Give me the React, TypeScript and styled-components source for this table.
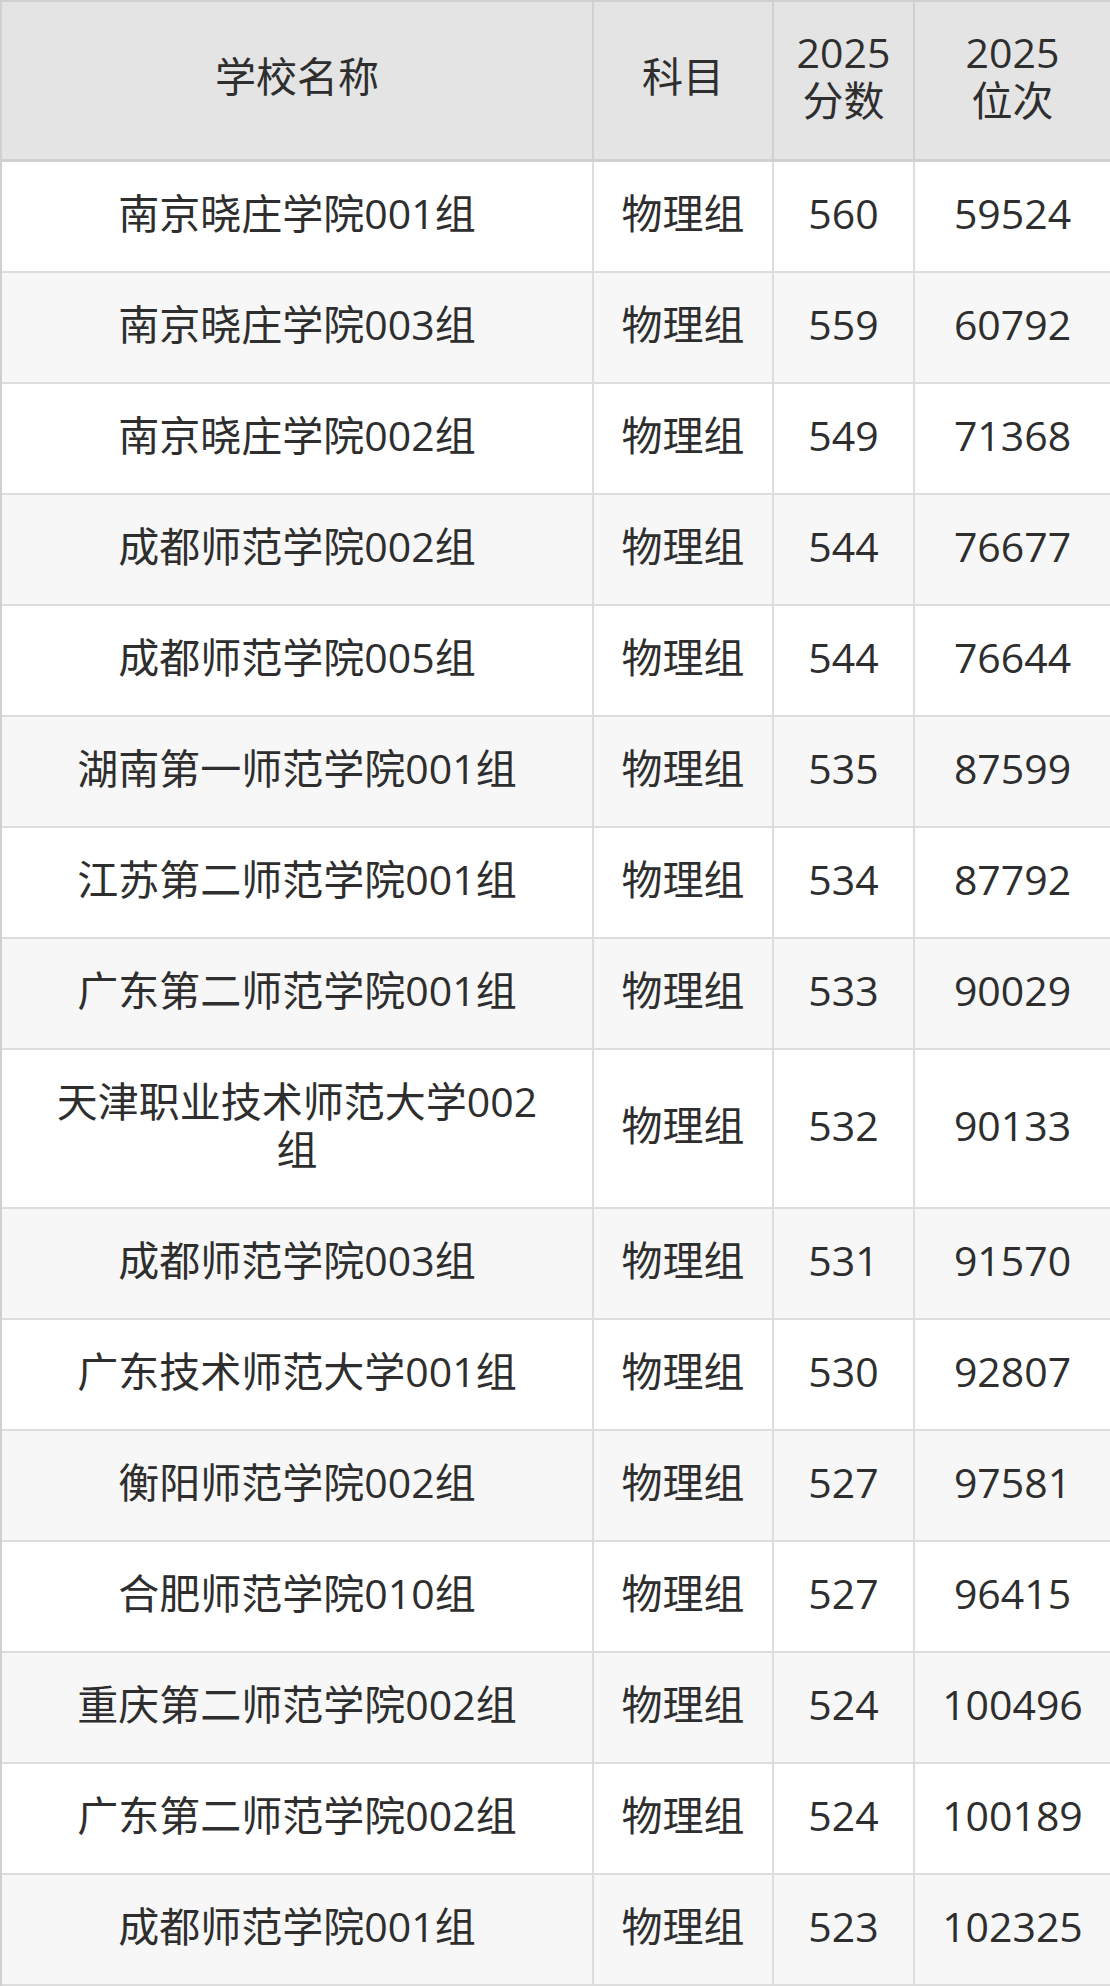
import React from "react";
import styled, { createGlobalStyle } from "styled-components";

const Global = createGlobalStyle`
  html, body { margin: 0; padding: 0; background: #ffffff; }
  body { font-family: "Open Sans", "Noto Sans CJK SC", sans-serif; }
`;

const Table = styled.table`
  width: 1110px;
  table-layout: fixed;
  border-collapse: separate;
  border-spacing: 0;
  border-top: 2px solid #d0d0d0;
  border-left: 2px solid #d0d0d0;
  font-family: "Open Sans", "Noto Sans CJK SC", sans-serif;
  font-size: 41px;
  line-height: 48px;
  color: #2e2e2e;
`;

const HeadCell = styled.th`
  background: #e4e4e4;
  font-weight: 400;
  text-align: center;
  vertical-align: middle;
  padding: 26px 8px 35px;
  border-right: 2px solid #d0d0d0;
  border-bottom: 3px solid #d0d0d0;
`;

const Row = styled.tr<{ $alt: boolean }>`
  background: ${(p) => (p.$alt ? "#f7f7f7" : "#ffffff")};
`;

const Cell = styled.td<{ $wide?: boolean }>`
  text-align: center;
  vertical-align: middle;
  padding: 27px ${(p) => (p.$wide ? "44px" : "4px")} 34px;
  border-right: 2px solid #dddddd;
  border-bottom: 2px solid #dddddd;
`;

const rows: [string, string, string, string][] = [
  ["南京晓庄学院001组", "物理组", "560", "59524"],
  ["南京晓庄学院003组", "物理组", "559", "60792"],
  ["南京晓庄学院002组", "物理组", "549", "71368"],
  ["成都师范学院002组", "物理组", "544", "76677"],
  ["成都师范学院005组", "物理组", "544", "76644"],
  ["湖南第一师范学院001组", "物理组", "535", "87599"],
  ["江苏第二师范学院001组", "物理组", "534", "87792"],
  ["广东第二师范学院001组", "物理组", "533", "90029"],
  ["天津职业技术师范大学002组", "物理组", "532", "90133"],
  ["成都师范学院003组", "物理组", "531", "91570"],
  ["广东技术师范大学001组", "物理组", "530", "92807"],
  ["衡阳师范学院002组", "物理组", "527", "97581"],
  ["合肥师范学院010组", "物理组", "527", "96415"],
  ["重庆第二师范学院002组", "物理组", "524", "100496"],
  ["广东第二师范学院002组", "物理组", "524", "100189"],
  ["成都师范学院001组", "物理组", "523", "102325"],
];

export default function App() {
  return (
    <>
      <Global />
      <Table>
        <colgroup>
          <col style={{ width: 592 }} />
          <col style={{ width: 180 }} />
          <col style={{ width: 141 }} />
          <col style={{ width: 197 }} />
        </colgroup>
        <thead>
          <tr>
            <HeadCell>学校名称</HeadCell>
            <HeadCell>科目</HeadCell>
            <HeadCell>
              2025
              <br />
              分数
            </HeadCell>
            <HeadCell>
              2025
              <br />
              位次
            </HeadCell>
          </tr>
        </thead>
        <tbody>
          {rows.map((r, i) => (
            <Row key={i} $alt={i % 2 === 1}>
              <Cell $wide>{r[0]}</Cell>
              <Cell>{r[1]}</Cell>
              <Cell>{r[2]}</Cell>
              <Cell>{r[3]}</Cell>
            </Row>
          ))}
        </tbody>
      </Table>
    </>
  );
}
